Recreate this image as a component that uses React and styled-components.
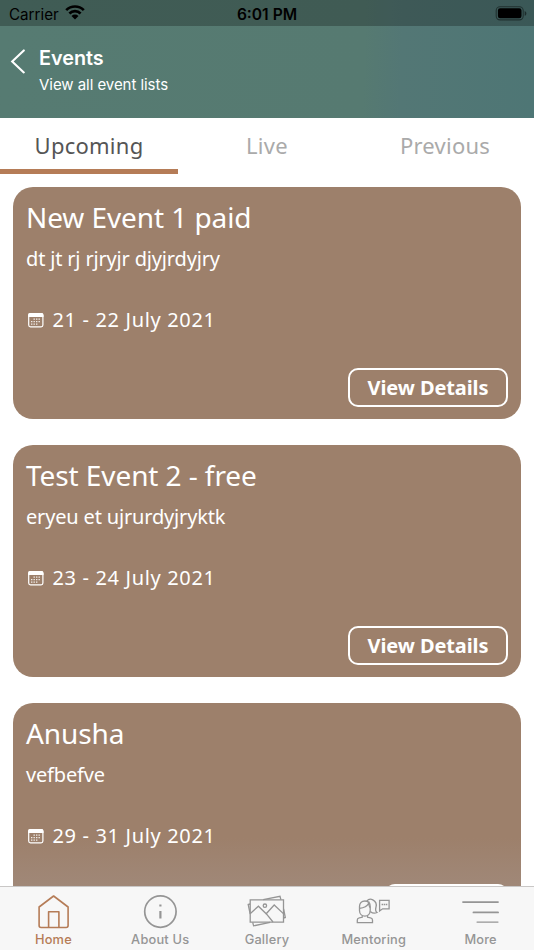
import { useState } from "react";
import styled, { createGlobalStyle } from "styled-components";

const events = [
  {
    id: 1,
    title: "New Event 1 paid",
    description: "dt jt rj rjryjr djyjrdyjry",
    date: "21 - 22 July 2021",
    action: "View Details",
  },
  {
    id: 2,
    title: "Test Event 2 - free",
    description: "eryeu et ujrurdyjryktk",
    date: "23 - 24 July 2021",
    action: "View Details",
  },
  {
    id: 3,
    title: "Anusha",
    description: "vefbefve",
    date: "29 - 31 July 2021",
    compact: true,
  },
];

const tabs = ["Upcoming", "Live", "Previous"];

const navItems = [
  { name: "Home", Icon: HomeIcon },
  { name: "About Us", Icon: InfoIcon },
  { name: "Gallery", Icon: GalleryIcon },
  { name: "Mentoring", Icon: MentoringIcon },
  { name: "More", Icon: MoreIcon },
];

export default function App() {
  const [tab, setTab] = useState("Upcoming");

  return (
    <Screen>
      <GlobalStyle />
      <Top>
        <StatusBar>
          <Carrier>
            Carrier
            <WifiIcon />
          </Carrier>
          <Clock>6:01 PM</Clock>
          <Battery>
            <BatteryIcon />
          </Battery>
        </StatusBar>
        <Head>
          <BackButton>
            <svg width="15" height="25" viewBox="0 0 15 25" fill="none">
              <path
                d="M13.8 1.4 2.2 12.4l11.6 11"
                stroke="#fff"
                strokeWidth="2.1"
                strokeLinecap="round"
              />
            </svg>
          </BackButton>
          <div>
            <Title>Events</Title>
            <SubTitle>View all event lists</SubTitle>
          </div>
        </Head>
      </Top>
      <Tabs>
        {tabs.map((name) => (
          <Tab key={name} $active={name === tab} onClick={() => setTab(name)}>
            {name}
          </Tab>
        ))}
      </Tabs>
      <List>
        {events.map((event) => (
          <Card key={event.id} $faded={event.compact}>
            <CardTitle>{event.title}</CardTitle>
            <Description>{event.description}</Description>
            <DateRow>
              <CalendarIcon />
              {event.date}
            </DateRow>
            <DetailsButton $compact={event.compact}>
              {event.action}
            </DetailsButton>
          </Card>
        ))}
      </List>
      <Nav>
        {navItems.map(({ name, Icon }) => (
          <NavItem key={name} $active={name === "Home"}>
            <Icon />
            <NavLabel>{name}</NavLabel>
          </NavItem>
        ))}
      </Nav>
    </Screen>
  );
}

function WifiIcon() {
  return (
    <svg width="20" height="15" viewBox="0 0 20 15" fill="none">
      <g stroke="#000" strokeWidth="2.7">
        <path d="M1.2 5.1a12.6 12.6 0 0 1 17.6 0" />
        <path d="M4.4 8.5a8 8 0 0 1 11.2 0" />
      </g>
      <path d="M10 14.4 6.5 11a5 5 0 0 1 7 0z" fill="#000" />
    </svg>
  );
}

function BatteryIcon() {
  return (
    <svg width="32" height="15" viewBox="0 0 32 15" fill="none">
      <rect
        x="1.2"
        y="0.7"
        width="27"
        height="13.2"
        rx="3.8"
        stroke="#000"
        strokeOpacity="0.45"
        strokeWidth="1.1"
      />
      <rect x="2.9" y="2.3" width="23.6" height="10" rx="2.2" fill="#000" />
      <path
        d="M29.7 5v4.8c1-.4 1.7-1.4 1.7-2.4S30.700 5.400 29.700 5z"
        fill="#000"
        fillOpacity="0.5"
      />
    </svg>
  );
}

function CalendarIcon() {
  return (
    <svg width="16" height="15" viewBox="0 0 16 15" fill="none">
      <rect
        x="0.7"
        y="0.7"
        width="14.2"
        height="13.2"
        rx="1.8"
        stroke="#fff"
        strokeWidth="1.2"
      />
      <path
        d="M.1 4V2A1.900 1.900 0 0 1 2 .1h11.600A1.900 1.900 0 0 1 15.500 2v2z"
        fill="#fff"
      />
      <g
        stroke="#fff"
        strokeWidth="1.2"
        strokeDasharray="1.4 1.1"
        strokeOpacity="0.85"
      >
        <path d="M5.5 6.200h7.500" />
        <path d="M3 8.700h10" />
        <path d="M3 11.100h7.500" />
      </g>
    </svg>
  );
}

function HomeIcon() {
  return (
    <svg
      width="34"
      height="34"
      viewBox="0 0 34 34"
      fill="none"
      stroke="currentColor"
      strokeWidth="1.6"
      strokeLinejoin="round"
    >
      <path d="M3.100 12 17.600 1l14.500 11v18.500a2 2 0 0 1-2 2h-25a2 2 0 0 1-2-2z" />
      <path d="M12.600 32.300V16.800h10.300v15.500" />
    </svg>
  );
}

function InfoIcon() {
  return (
    <svg
      width="34"
      height="34"
      viewBox="0 0 34 34"
      fill="none"
      stroke="currentColor"
    >
      <circle cx="17.4" cy="16.600" r="15.7" strokeWidth="1.7" />
      <path d="M17.4 16v7.500" strokeWidth="2.2" />
      <path d="M17.4 9.500v2" strokeWidth="2.2" />
    </svg>
  );
}

function GalleryIcon() {
  return (
    <svg
      width="40"
      height="34"
      viewBox="0 0 40 34"
      fill="none"
      stroke="currentColor"
      strokeWidth="1.3"
    >
      <path d="M3.200 4.900h33.300v22.200H3.200z" />
      <path d="M16.200 4.600 33 1.300l.9 3.400" />
      <path d="M3.100 9 1.200 9.500l2 9.500M36.600 14l1.700 8.500-1.900.5" />
      <path d="m5.700 27.300.9 3.500 16.500-3.400" />
      <path d="m3.400 18.500 8-7.300 7.800 7.500 8-8.700 9.200 8.600" />
      <path d="m19.200 18.700 6.800 8.300" />
      <circle cx="17.900" cy="10.700" r="1.700" />
    </svg>
  );
}

function MentoringIcon() {
  return (
    <svg
      width="36"
      height="34"
      viewBox="0 0 36 34"
      fill="none"
      stroke="currentColor"
      strokeWidth="1.3"
    >
      <path d="M6.200 20.600v1.700l-3 .6c-1.200.2-1.900 1-1.900 2.200v2.600h15.200v-2.600c0-1.200-.7-2-1.900-2.200l-3-.6v-1.700" />
      <path d="M3.500 11.500v4c0 3.500 2.400 5.700 5.400 5.700s5.300-2.200 5.300-5.700v-4c0-3.500-2.100-5.500-5.300-5.500s-5.400 2-5.400 5.500z" />
      <path d="M3.500 13.300c4.500-.5 7.700-2.200 9.200-5.100.2 2.300.6 3.700 1.500 4.600" />
      <path d="M10.700 6.200c1.600-2 4-2.500 6.100-1.400 3 1.500 4 4.200 3.200 7.200-.7 2.500-.4 4.500 1 5.500-2.200 1.100-4.700.6-6.800-1.100" />
      <path d="M23.600 5.300h9.500v8.500h-6.500l-3 2.200z" />
      <path d="M25.600 9.500h5.800" strokeWidth="1.5" strokeDasharray="1.500 .6" />
    </svg>
  );
}

function MoreIcon() {
  return (
    <svg
      width="38"
      height="34"
      viewBox="0 0 38 34"
      fill="none"
      stroke="currentColor"
      strokeLinecap="round"
    >
      <path d="M1 7.100h35" strokeWidth="1.8" />
      <path d="M11.500 17.400H36" strokeWidth="1.900" />
      <path d="M15 27.100h21" strokeWidth="1.100" />
    </svg>
  );
}

const GlobalStyle = createGlobalStyle`
  body {
    margin: 0;
    background: #fff;
  }

  * {
    box-sizing: border-box;
  }

  button {
    font-family: inherit;
  }
`;

const Screen = styled.div`
  height: 950px;
  display: flex;
  flex-direction: column;
  overflow: hidden;
  font-family: "Noto Sans", sans-serif;
`;

const Top = styled.header`
  height: 118px;
  flex-shrink: 0;
  background: linear-gradient(
    92deg,
    #567b72 0%,
    #567a71 68%,
    #537775 75%,
    #4e7675 100%
  );
  font-family: Inter, sans-serif;
`;

const StatusBar = styled.div`
  height: 26px;
  padding: 2px 7px 0 9px;
  display: grid;
  grid-template-columns: 1fr auto 1fr;
  align-items: center;
  background: rgba(0, 0, 0, 0.25);
  color: #000;
  font-size: 15.6px;
`;

const Carrier = styled.div`
  display: flex;
  align-items: center;
  gap: 6px;
  font-size: 15.2px;

  svg {
    margin-top: -3px;
  }
`;

const Clock = styled.div`
  padding-right: 2px;
  font-weight: 600;
`;

const Battery = styled.div`
  display: flex;
  justify-content: flex-end;
  padding-bottom: 1px;
`;

const Head = styled.div`
  display: flex;
  padding: 20px 10px 0;
`;

const BackButton = styled.button`
  display: flex;
  align-self: flex-start;
  padding: 3px 0 0;
  margin-right: 14px;
  border: none;
  background: none;
`;

const Title = styled.h1`
  margin: 0;
  color: #fff;
  font-size: 19.8px;
  font-weight: 600;
  line-height: 24px;
`;

const SubTitle = styled.div`
  margin-top: 4px;
  color: #fff;
  font-size: 15px;
  line-height: 22px;
  letter-spacing: -0.05px;
`;

const Tabs = styled.div`
  display: grid;
  grid-template-columns: repeat(3, 1fr);
  height: 56px;
  flex-shrink: 0;
`;

const Tab = styled.button`
  padding: 3px 0 0;
  border: none;
  border-bottom: 5px solid
    ${(props) => (props.$active ? "#b57c57" : "transparent")};
  background: none;
  color: ${(props) => (props.$active ? "#555" : "#aaa")};
  font-size: 22px;
  letter-spacing: 0.25px;
`;

const List = styled.main`
  flex: 1;
  min-height: 0;
  overflow: hidden;
  padding: 13px 13px 0;
`;

const Card = styled.article`
  display: flex;
  flex-direction: column;
  height: 232px;
  margin-bottom: 26px;
  padding: 11px 13px 12px;
  border-radius: 20px;
  background: ${(props) =>
    props.$faded
      ? "linear-gradient(#9d806b 0, #9d806b 135px, #a08878 183px)"
      : "#9d806b"};
  color: #fff;
`;

const CardTitle = styled.h2`
  margin: 0;
  font-size: 28px;
  font-weight: 400;
  line-height: 38px;
  letter-spacing: -0.08px;
`;

const Description = styled.p`
  margin: 9px 0 0;
  font-size: 20px;
  line-height: 28px;
  letter-spacing: -0.17px;
`;

const DateRow = styled.div`
  display: flex;
  align-items: center;
  gap: 8.5px;
  margin-top: 33px;
  padding-left: 2px;
  font-size: 20px;
  line-height: 28px;
  letter-spacing: 0.66px;
`;

const DetailsButton = styled.button`
  align-self: flex-end;
  width: ${(props) => (props.$compact ? "123px" : "160px")};
  height: 39px;
  margin-top: auto;
  padding: 0 0 1px;
  border: 2px solid #fff;
  border-radius: 10px;
  background: none;
  color: #fff;
  font-size: 20px;
  font-weight: 700;
  letter-spacing: -0.1px;
`;

const Nav = styled.nav`
  display: grid;
  grid-template-columns: repeat(5, 1fr);
  height: 64px;
  flex-shrink: 0;
  border-top: 1px solid #c9c7c6;
  background: #f7f7f7;
  font-family: Inter, sans-serif;
`;

const NavItem = styled.a`
  display: flex;
  flex-direction: column;
  align-items: center;
  padding-top: 8px;
  color: ${(props) => (props.$active ? "#b57c57" : "#959595")};
`;

const NavLabel = styled.span`
  margin-top: 3px;
  font-size: 12.8px;
  font-weight: 500;
  line-height: 16px;
  letter-spacing: 0.2px;
`;
